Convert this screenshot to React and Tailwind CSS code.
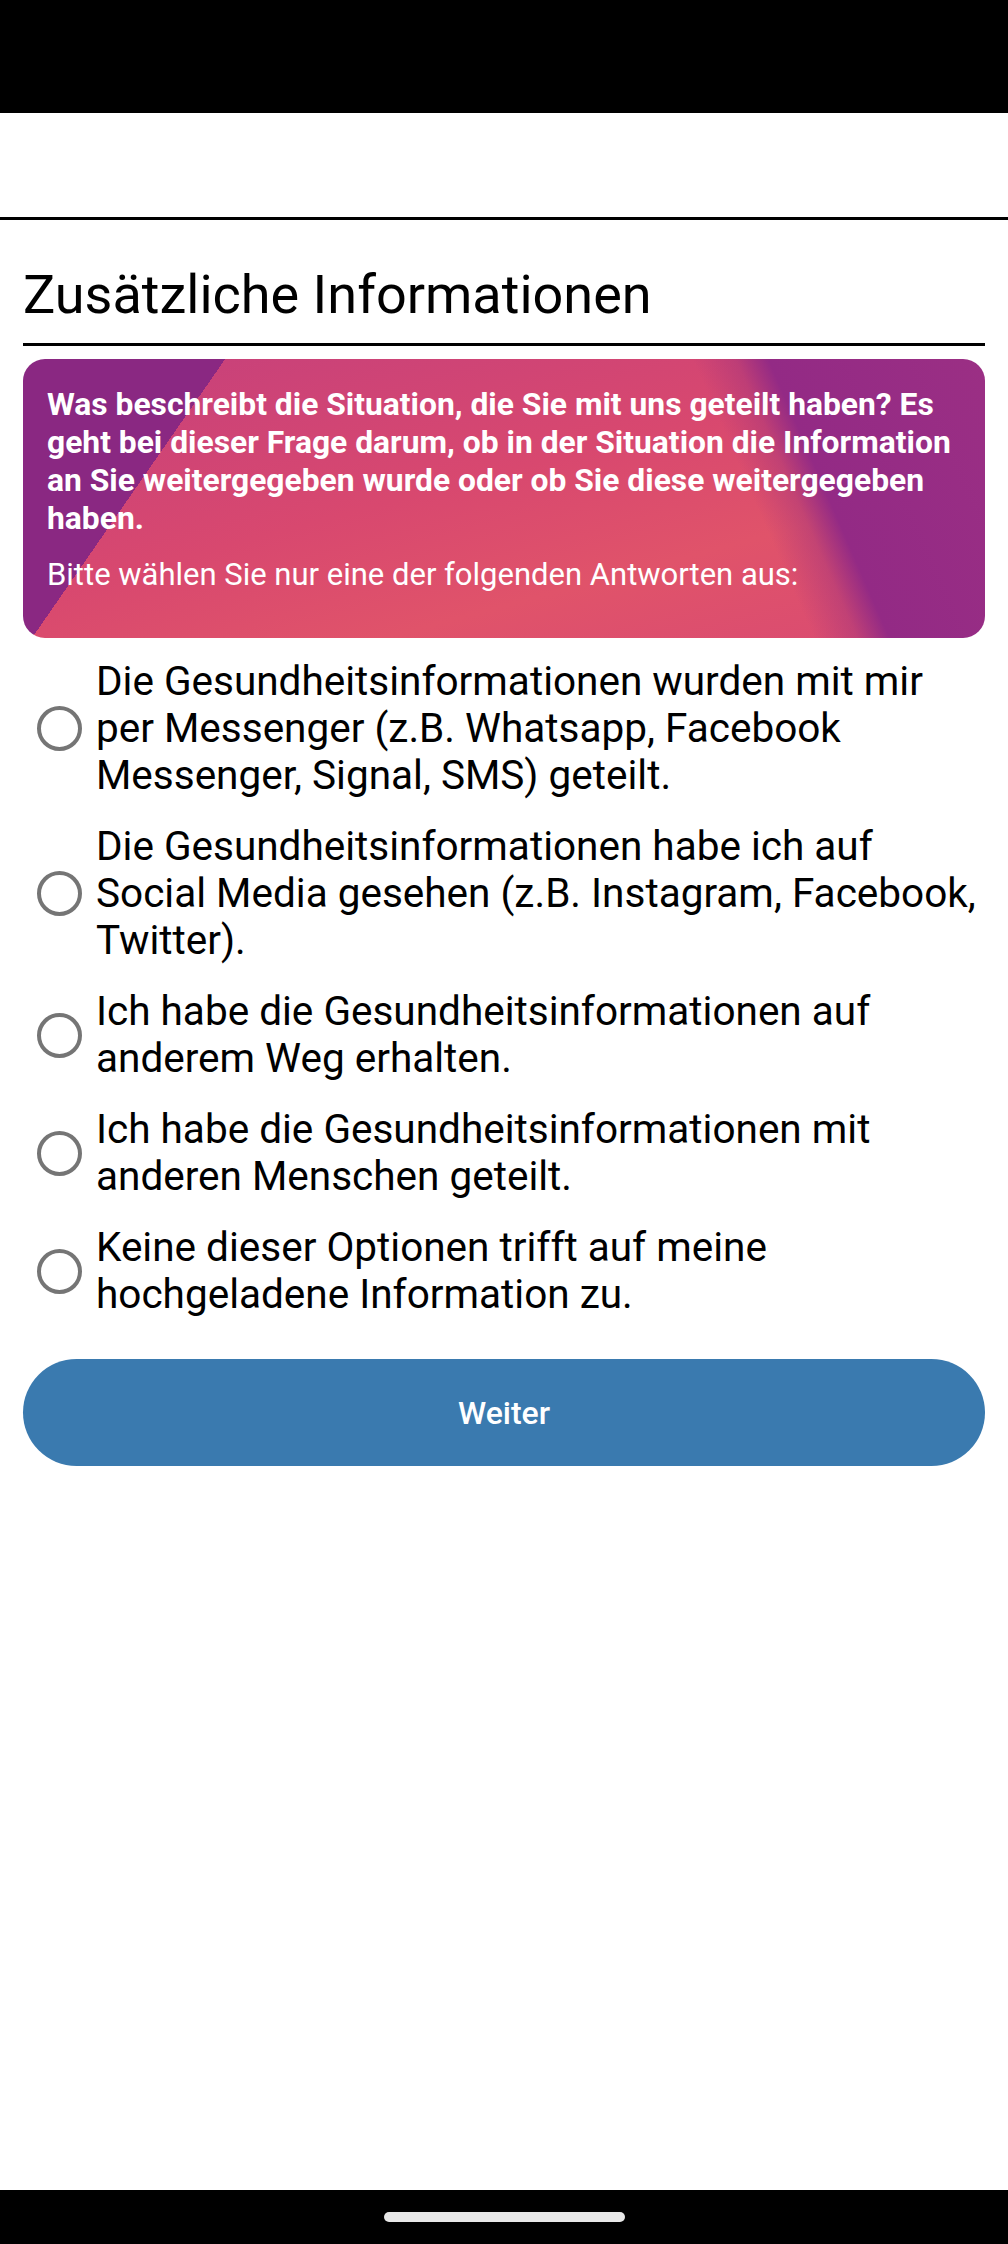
import { useState } from 'react';

// Antwortmöglichkeiten
const options = [
  'Die Gesundheitsinformationen wurden mit mir per Messenger (z.B. Whatsapp, Facebook Messenger, Signal, SMS) geteilt.',
  'Die Gesundheitsinformationen habe ich auf Social Media gesehen (z.B. Instagram, Facebook, Twitter).',
  'Ich habe die Gesundheitsinformationen auf anderem Weg erhalten.',
  'Ich habe die Gesundheitsinformationen mit anderen Menschen geteilt.',
  'Keine dieser Optionen trifft auf meine hochgeladene Information zu.',
];

const RadioOption = ({ label, checked, onSelect }) => (
  <button onClick={onSelect} className="flex items-center w-full text-left">
    <span className="ml-[14px] shrink-0 w-[45px] h-[45px] rounded-full border-[4px] border-[#757575] flex items-center justify-center">
      {checked && <span className="w-[22px] h-[22px] rounded-full bg-[#3b7bb0]" />}
    </span>
    <span className="ml-[14px] text-[40.5px] leading-[47px] text-black">{label}</span>
  </button>
);

const App = () => {
  const [selected, setSelected] = useState(null);

  return (
    <div className="min-h-screen flex flex-col bg-white font-['Roboto','Noto_Sans',sans-serif]">
      {/* Statusleiste */}
      <div className="h-[113px] bg-black" />

      {/* Kopfbereich */}
      <header className="h-[104px] bg-white" />
      <div className="h-[3px] bg-black" />

      {/* Inhalt */}
      <main className="flex-1 px-[23px]">
        <h1 className="mt-[45px] text-[54px] leading-[60px] text-black">Zusätzliche Informationen</h1>
        <div className="mt-[18px] h-[3px] bg-black" />

        <section className="mt-[13px] rounded-[22px] overflow-hidden text-white pl-[24px] pr-[20px] pt-[26px] pb-[44px] bg-[linear-gradient(124.7deg,#8a2882_17.5%,transparent_17.5%),linear-gradient(66.5deg,transparent_73%,rgba(160,50,125,0.45)_77%,#932a85_80%,#9b2f84_100%),linear-gradient(165deg,#c5407c_0%,#d8486f_45%,#e0536a_70%,#d94a72_100%)]">
          <p className="text-[31.8px] leading-[38px] font-bold">
            Was beschreibt die Situation, die Sie mit uns geteilt haben? Es geht bei dieser Frage darum, ob in der Situation die Information an Sie weitergegeben wurde oder ob Sie diese weitergegeben haben.
          </p>
          <p className="mt-[19px] text-[31px] leading-[38px]">
            Bitte wählen Sie nur eine der folgenden Antworten aus:
          </p>
        </section>

        <div className="mt-[20px] flex flex-col gap-[24px]">
          {options.map((opt, i) => (
            <RadioOption key={i} label={opt} checked={selected === i} onSelect={() => setSelected(i)} />
          ))}
        </div>

        <button className="mt-[41px] w-full h-[107px] rounded-full bg-[#3a7aaf] text-white text-[32px] font-medium">
          Weiter
        </button>
      </main>

      {/* Navigationsleiste */}
      <div className="h-[54px] bg-black flex justify-center pt-[22px]">
        <div className="w-[241px] h-[10px] rounded-full bg-[#e8e8e8]" />
      </div>
    </div>
  );
};

export default App;
